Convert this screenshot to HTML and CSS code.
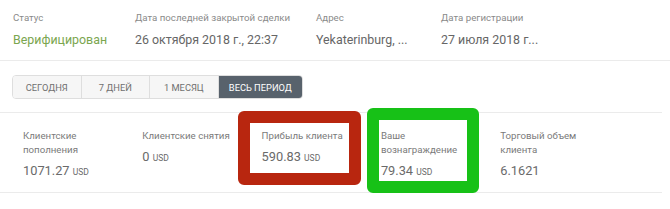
FILE: index.html
```html
<!DOCTYPE html>
<html>
<head>
<meta charset="utf-8">
<link rel="stylesheet" href="styles.css">
</head>
<body>
<div class="page">
  <div class="info">
    <div class="info-col c1">
      <div class="label">Статус</div>
      <div class="val green">Верифицирован</div>
    </div>
    <div class="info-col c2">
      <div class="label">Дата последней закрытой сделки</div>
      <div class="val">26 октября 2018 г., 22:37</div>
    </div>
    <div class="info-col c3">
      <div class="label">Адрес</div>
      <div class="val">Yekaterinburg, ...</div>
    </div>
    <div class="info-col c4">
      <div class="label">Дата регистрации</div>
      <div class="val">27 июля 2018 г...</div>
    </div>
  </div>
  <div class="tabs">
    <div class="tab">СЕГОДНЯ</div>
    <div class="tab">7 ДНЕЙ</div>
    <div class="tab">1 МЕСЯЦ</div>
    <div class="tab active">ВЕСЬ ПЕРИОД</div>
  </div>
  <div class="stats">
    <div class="stat">
      <div class="slabel">Клиентские<br>пополнения</div>
      <div class="sval">1071.27 <span class="cur">USD</span></div>
    </div>
    <div class="stat">
      <div class="slabel">Клиентские снятия</div>
      <div class="sval">0 <span class="cur">USD</span></div>
    </div>
    <div class="stat">
      <div class="slabel">Прибыль клиента</div>
      <div class="sval">590.83 <span class="cur">USD</span></div>
    </div>
    <div class="stat">
      <div class="slabel">Ваше<br>вознаграждение</div>
      <div class="sval">79.34 <span class="cur">USD</span></div>
    </div>
    <div class="stat">
      <div class="slabel">Торговый объем<br>клиента</div>
      <div class="sval">6.1621</div>
    </div>
  </div>
  <div class="mark red"></div>
  <div class="mark greenmark"></div>
</div>
</body>
</html>
```
FILE: styles.css
```css
* { box-sizing: border-box; }
html, body { margin: 0; padding: 0; background: #fff; }
body { font-family: Roboto, "Noto Sans", sans-serif; width: 670px; height: 209px; overflow: hidden; }
.page { position: relative; width: 670px; height: 209px; }
.info { display: flex; height: 61px; border-bottom: 1px solid #ebebeb; padding-left: 13px; padding-top: 11px; }
.info-col { display: flex; flex-direction: column; }
.c1 { width: 122px; }
.c2 { width: 181px; }
.c3 { width: 125px; }
.c4 { width: 150px; }
.label { font-size: 9.7px; color: #8a8a8a; line-height: 14px; }
.val { font-size: 12.4px; color: #666; line-height: 18px; margin-top: 6px; }
.val.green { color: #7ba64f; }
.tabs { display: flex; margin: 14px 0 0 12px; width: 291px; height: 24px; border: 1px solid #dedede; border-radius: 4px; overflow: hidden; }
.tab { width: 69px; display: flex; align-items: center; justify-content: center; font-size: 9.3px; color: #707070; background: #f6f6f6; border-right: 1px solid #dedede; }
.tab.active { width: 84px; background: #58626c; color: #fff; border-right: none; }
.stats { display: flex; margin-top: 13px; width: 662px; height: 81px; border-top: 1px solid #ebebeb; border-bottom: 1px solid #ebebeb; padding-left: 23px; padding-top: 16px; }
.stat { width: 119.3px; display: flex; flex-direction: column; }
.slabel { font-size: 9.7px; line-height: 14px; color: #7a7a7a; }
.sval { font-size: 12.8px; color: #6a6a6a; margin-top: 6px; line-height: 16px; }
.cur { font-size: 8.5px; }
.mark { position: absolute; border-radius: 6px; }
.mark.red { left: 238px; top: 111px; width: 123px; height: 74px; border: 12px solid #b8260f; }
.mark.greenmark { left: 367px; top: 108px; width: 112px; height: 85px; border: 12px solid #17c117; }
```
